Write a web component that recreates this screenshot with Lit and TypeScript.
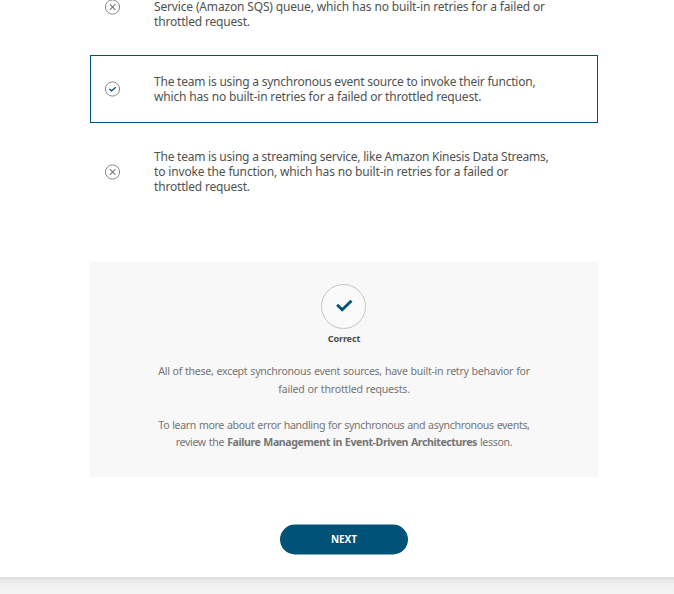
import { LitElement, html, css, svg } from "lit";
import { customElement, property } from "lit/decorators.js";
import { styleMap } from "lit/directives/style-map.js";

interface Line {
  text: string;
  tracking: number;
}

const line = (text: string, tracking = 0): Line => ({ text, tracking });

const options = [
  {
    correct: false,
    lines: [
      line("\u00a0"),
      line("Service (Amazon SQS) queue, which has no built-in retries for a failed or", -0.158),
      line("throttled request.", -0.18),
    ],
  },
  {
    correct: true,
    lines: [
      line("The team is using a synchronous event source to invoke their function,", -0.225),
      line("which has no built-in retries for a failed or throttled request.", -0.16),
    ],
  },
  {
    correct: false,
    lines: [
      line("The team is using a streaming service, like Amazon Kinesis Data Streams,", -0.23),
      line("to invoke the function, which has no built-in retries for a failed or", -0.152),
      line("throttled request.", -0.18),
    ],
  },
];

const track = (px: number) => styleMap({ letterSpacing: `${px}px` });

@customElement("answer-option")
class AnswerOption extends LitElement {
  @property({ type: Boolean }) correct = false;
  @property({ attribute: false }) lines: Line[] = [];

  static styles = css`
    :host { display: block; }
    .option {
      box-sizing: border-box;
      display: flex;
      align-items: center;
      gap: 33px;
      padding: 18px 14px;
      border: 1px solid transparent;
    }
    .selected { border-color: #005276; }
    .mark { flex: none; width: 16px; height: 16px; display: block; }
    .text {
      font-size: 12px;
      line-height: 15px;
      color: #4f5250;
      white-space: nowrap;
    }
    .line { display: block; }
  `;

  render() {
    return html`
      <div class="option ${this.correct ? "selected" : ""}">
        <svg class="mark" viewBox="0 0 16 16" fill="none">
          <circle cx="7.5" cy="8" r="7.1" stroke="#888" />
          ${this.correct
            ? svg`<path d="M4.3 8 L6.6 9.8 L10.8 6.2" stroke="#005276" stroke-width="1.3" />`
            : svg`<path d="M4.8 5.2 L10.4 10.8 M10.4 5.2 L4.8 10.8" stroke="#777" stroke-width="1.1" />`}
        </svg>
        <div class="text">
          ${this.lines.map((l) => html`<span class="line" style=${track(l.tracking)}>${l.text}</span>`)}
        </div>
      </div>
    `;
  }
}

@customElement("app-root")
class AppRoot extends LitElement {
  static styles = css`
    :host {
      display: block;
      height: 594px;
      overflow: hidden;
      font-family: "Noto Sans", sans-serif;
    }
    .page {
      box-sizing: border-box;
      height: 577px;
      background: #fff;
      display: flex;
      flex-direction: column;
      align-items: center;
    }
    .below {
      height: 17px;
      background: linear-gradient(#dedede, #ebebeb 4px, #f3f3f3 9px);
    }
    .quiz {
      width: 508px;
      margin-left: 14px;
      display: flex;
      flex-direction: column;
      align-items: center;
    }
    .options {
      width: 100%;
      margin-top: -35px;
      display: flex;
      flex-direction: column;
      gap: 7px;
    }
    .feedback {
      box-sizing: border-box;
      width: 100%;
      height: 215px;
      margin-top: 49px;
      padding-top: 22px;
      background: #f8f8f8;
      display: flex;
      flex-direction: column;
      align-items: center;
      text-align: center;
    }
    .badge { flex: none; width: 45px; height: 45px; margin-right: 1px; display: block; }
    .verdict {
      margin-top: 4px;
      font-size: 9px;
      line-height: 12px;
      font-weight: 700;
      letter-spacing: -0.1px;
      color: #4b4b4b;
    }
    .explain {
      margin: 18px 0 0;
      font-size: 10.6px;
      line-height: 17.8px;
      word-spacing: 0.5px;
      color: #757575;
      white-space: nowrap;
    }
    .explain + .explain { margin-top: 18px; }
    .line { display: block; }
    .next {
      width: 128px;
      height: 30px;
      margin-top: 47.5px;
      padding: 0 0 1px;
      border: 0;
      border-radius: 15px;
      background: #005276;
      color: #fff;
      transform: translateY(-0.5px);
      font: 700 10px "Open Sans", sans-serif;
    }
  `;

  render() {
    return html`
      <main class="page">
        <div class="quiz">
          <div class="options">
            ${options.map(
              (o) => html`<answer-option ?correct=${o.correct} .lines=${o.lines}></answer-option>`
            )}
          </div>
          <section class="feedback">
            <svg class="badge" viewBox="0 0 45 45" fill="none">
              <circle cx="22.5" cy="22.5" r="22" fill="#fafafa" stroke="#c4c4c4" />
              <path d="M17.2 21.8 L21.2 25.7 L29.4 17.8" stroke="#005276" stroke-width="2.9" stroke-linecap="square" />
            </svg>
            <div class="verdict">Correct</div>
            <p class="explain">
              <span class="line" style=${track(-0.285)}>All of these, except synchronous event sources, have built-in retry behavior for</span>
              <span class="line" style=${track(-0.22)}>failed or throttled requests.</span>
            </p>
            <p class="explain">
              <span class="line" style=${track(-0.345)}>To learn more about error handling for synchronous and asynchronous events,</span>
              <span class="line" style=${track(-0.32)}>review the <b style=${track(-0.41)}>Failure Management in Event-Driven Architectures</b> lesson.</span>
            </p>
          </section>
          <button class="next">NEXT</button>
        </div>
      </main>
      <div class="below"></div>
    `;
  }
}
